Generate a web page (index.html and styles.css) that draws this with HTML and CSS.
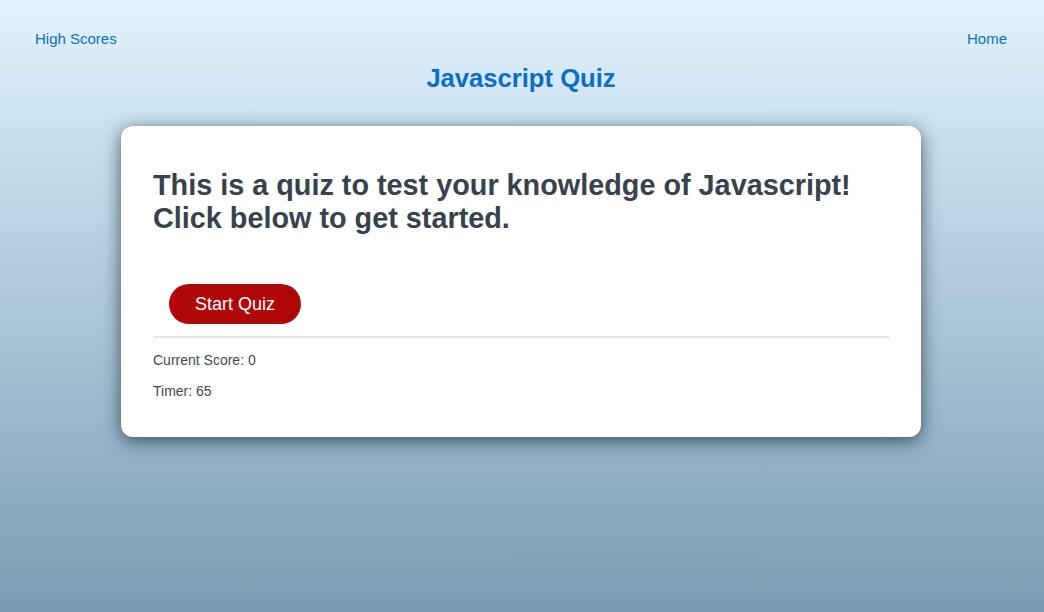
FILE: index.html
```html
<!DOCTYPE html>
<html lang="en">
<head>
<meta charset="utf-8">
<title>Javascript Quiz</title>
<link rel="stylesheet" href="styles.css">
</head>
<body>
  <nav class="nav">
    <a class="nav-link" href="#">High Scores</a>
    <a class="nav-link" href="#">Home</a>
  </nav>
  <h1 class="title">Javascript Quiz</h1>
  <main class="card">
    <h2 class="intro">This is a quiz to test your knowledge of Javascript!<br>Click below to get started.</h2>
    <button class="start-btn" type="button">Start Quiz</button>
    <hr class="divider">
    <p class="stat">Current Score: 0</p>
    <p class="stat">Timer: 65</p>
  </main>
</body>
</html>
```

FILE: styles.css
```css
html, body {
  margin: 0;
  padding: 0;
}
body {
  min-height: 100vh;
  padding-right: 2px;
  background: linear-gradient(to bottom, #e1f3fe 0%, #799cb4 100%);
  font-family: "Liberation Sans", Arial, sans-serif;
}
.nav {
  display: flex;
  justify-content: space-between;
  padding: 30px 35px 0 35px;
  font-size: 15px;
  line-height: 18px;
}
.nav-link {
  color: #0a72c8;
  text-decoration: none;
}
.title {
  margin: 16px 0 0;
  text-align: center;
  font-size: 25.6px;
  line-height: 28px;
  font-weight: bold;
  color: #0b6fc4;
}
.card {
  box-sizing: border-box;
  width: 800px;
  margin: 34px auto 0;
  padding: 43px 32px 37px;
  background: #fff;
  border-radius: 12px;
  box-shadow: 0 4px 18px rgba(30, 45, 60, 0.75);
}
.intro {
  margin: 0;
  font-size: 28.8px;
  line-height: 33px;
  font-weight: bold;
  color: #38424d;
}
.start-btn {
  display: block;
  margin: 49px 0 0 16px;
  height: 40px;
  padding: 0 26px;
  border: none;
  border-radius: 20px;
  background: #b00808;
  color: #fff;
  font-family: "Liberation Sans", Arial, sans-serif;
  font-size: 18px;
}
.divider {
  margin: 12px 0 0;
  border: none;
  border-top: 2px solid #e6e6e6;
}
.stat {
  margin: 14px 0 0;
  font-size: 14px;
  line-height: 17px;
  color: #444a52;
}
.stat + .stat {
  margin-top: 14px;
}
```
